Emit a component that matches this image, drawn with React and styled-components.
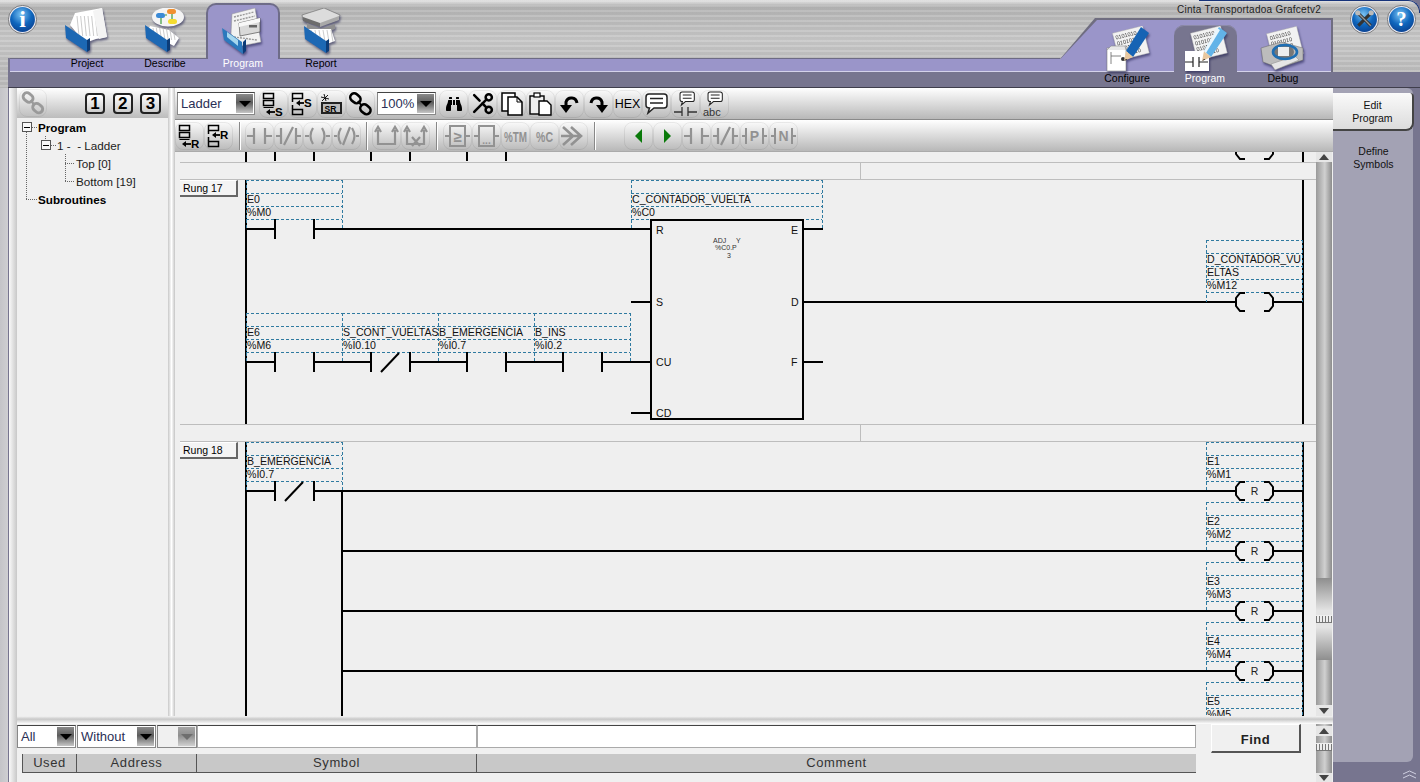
import * as React from "react";
import styled, { createGlobalStyle } from "styled-components";
import { FaBinoculars } from "react-icons/fa";
import { Scissors } from "lucide-react";

const LAV = "#9a95c9";
const DARK = "#77758f";
const UI = '"Liberation Sans", Arial, sans-serif';

const GlobalStyle = createGlobalStyle`
  html, body { margin: 0; padding: 0; background: ${DARK}; }
  body { font-family: ${UI}; color: #000; }
`;

const Frame = styled.div`
  width: 1420px;
  height: 782px;
  overflow: hidden;
  display: flex;
  flex-direction: column;
  background: ${DARK};
`;

/* ---------- header ---------- */
const Header = styled.header`
  position: relative;
  height: 88px;
  flex: none;
  display: grid;
  grid-template-columns: 1060px 273px 87px;
  grid-template-rows: 72px 16px;
  background: repeating-linear-gradient(180deg, rgba(255, 255, 255, 0.1) 0 2px, rgba(0, 0, 0, 0.03) 2px 5px),
    linear-gradient(180deg, #dcdcdc 0, #d8d8d8 3px, #b4b4b4 6px, #c8c8c8 40px, #bcbcbc 72px);
  border-top-right-radius: 12px;
  &::after {
    content: "";
    position: absolute;
    top: 0;
    right: 0;
    width: 220px;
    height: 12px;
    border-top: 1px solid #16337a;
    border-right: 1px solid #16337a;
    border-top-right-radius: 12px;
  }
`;

const LeftArea = styled.div`
  grid-row: 1;
  grid-column: 1;
  margin-left: 8px;
  display: flex;
  align-items: flex-start;
  background: linear-gradient(${DARK}, ${DARK}) 0 58px / 2px 14px no-repeat,
    linear-gradient(180deg, transparent 58px, #6d6b85 58px, #6d6b85 59px, ${LAV} 59px, ${LAV} 71px, #d4d2ea 71px);
`;

const RoundBtn = styled.div`
  width: 28px;
  height: 28px;
  flex: none;
  margin-top: 5px;
`;

const TabRow = styled.nav`
  display: flex;
  margin-left: 12px;
`;

const Tab = styled.div`
  width: 74px;
  margin: 3px 2px 0;
  display: flex;
  flex-direction: column;
  align-items: center;
`;

const TabTop = styled.div`
  width: 74px;
  height: 56px;
  box-sizing: border-box;
  display: flex;
  justify-content: center;
  padding-top: ${(p) => (p.$active ? 3 : 5)}px;
  ${(p) =>
    p.$active &&
    `background: ${LAV};
     border: 2px solid #6e6c88;
     border-bottom: none;
     border-radius: 10px 10px 0 0;`}
`;

const TabLabel = styled.span`
  font-size: 10.5px;
  line-height: 12px;
  margin-top: -2px;
  color: ${(p) => (p.$active ? "#fff" : "#000")};
  white-space: nowrap;
`;

const RightArea = styled.div`
  grid-row: 1 / 3;
  grid-column: 2;
  position: relative;
  z-index: 1;
  &::before,
  &::after {
    content: "";
    position: absolute;
    left: 0;
    right: 0;
    top: 18px;
    height: 41px;
    clip-path: polygon(35px 0, 100% 0, 100% 100%, 0 100%);
    z-index: -1;
  }
  &::before {
    height: 54px;
    clip-path: polygon(35px 0, 100% 0, 100% 100%, 35px 100%, 0 41px);
    background: #6f6d80;
  }
  &::after {
    top: 20px;
    right: 2px;
    height: 52px;
    clip-path: polygon(37px 0, 100% 0, 100% 100%, 0 100%, 0 39.5px);
    background: linear-gradient(180deg, ${LAV} 51px, #d4d2ea 51px);
  }
`;

const TitleText = styled.div`
  height: 15px;
  padding-top: 4px;
  text-align: right;
  padding-right: 12px;
  font-size: 10px;
  line-height: 12px;
  letter-spacing: 0.25px;
  color: #222;
  white-space: nowrap;
`;

const RightTabs = styled.nav`
  display: flex;
  padding-left: 28px;
  margin-top: -19px;
`;

const RightTab = styled.div`
  width: 78px;
  display: flex;
  flex-direction: column;
  align-items: center;
`;

const RightTabTop = styled.div`
  width: 63px;
  height: 47px;
  margin-top: 25px;
  display: flex;
  justify-content: center;
  align-items: flex-end;
  border-radius: 10px 10px 0 0;
  ${(p) => p.$active && `background: ${DARK}; box-shadow: inset 0 1px 0 #8d8ba8;`}
`;

const RightTabLabel = styled(TabLabel)`
  margin-top: 0;
`;

const HelpArea = styled.div`
  grid-row: 1;
  grid-column: 3;
  display: flex;
  gap: 9px;
  padding-left: 17px;
`;

const Strip = styled.div`
  grid-row: 2;
  grid-column: 1 / 4;
  margin-left: 8px;
  background: ${DARK};
  border-bottom: 1px solid #3f3e4c;
`;

/* ---------- body ---------- */
const Body = styled.div`
  flex: 1;
  min-height: 0;
  display: flex;
`;

const OuterGutter = styled.div`
  width: 8px;
  flex: none;
  background: linear-gradient(90deg, #c4c4c8, #cfcfd2);
  border-right: 1px solid ${DARK};
`;

const InnerGutter = styled.div`
  width: 8px;
  flex: none;
  background: linear-gradient(90deg, #fafafa, #c8c8c8);
`;

const Main = styled.main`
  width: 1316px;
  flex: none;
  display: flex;
  flex-direction: column;
  background: #f0f0f0;
`;

const Upper = styled.div`
  height: 628px;
  flex: none;
  display: flex;
`;

const TreePanel = styled.aside`
  width: 151px;
  flex: none;
  display: flex;
  flex-direction: column;
  background: #f0f0f0;
`;

const TreeTools = styled.div`
  height: 30px;
  flex: none;
  display: flex;
  align-items: center;
  padding-left: 2px;
  background: linear-gradient(180deg, #fff, #bcbcbc);
`;

const LinkBtn = styled.div`
  width: 28px;
  height: 28px;
  display: flex;
  align-items: center;
  justify-content: center;
  margin-right: 38px;
  border: 1px solid rgba(0, 0, 0, 0.06);
  border-radius: 8px;
  box-sizing: border-box;
`;

const NumBtn = styled.div`
  width: 21px;
  height: 21px;
  margin-right: 7.5px;
  box-sizing: border-box;
  border: 2px solid #222;
  border-radius: 4px;
  background: linear-gradient(180deg, #fff, #ccc);
  font-size: 17px;
  font-weight: 700;
  line-height: 17px;
  text-align: center;
`;

const Tree = styled.ul`
  list-style: none;
  margin: 0;
  padding: 0;
`;

const TreeRow = styled.li`
  height: 18px;
  display: flex;
  align-items: center;
  font-size: 11.7px;
  font-weight: ${(p) => (p.$bold ? 700 : 400)};
  color: ${(p) => (p.$bold ? "#000" : "#1c1c1c")};
  white-space: pre;
`;

const GutterSvg = styled.svg`
  flex: none;
`;

const Splitter = styled.div`
  width: 7px;
  flex: none;
  background: linear-gradient(90deg, #c8c8c8, #fff 50%, #c4c4c4);
`;

const Editor = styled.section`
  width: 1158px;
  flex: none;
  display: flex;
  flex-direction: column;
`;

const ToolRow = styled.div`
  height: ${(p) => p.$h}px;
  flex: none;
  box-sizing: border-box;
  display: flex;
  align-items: center;
  padding-left: ${(p) => p.$pad}px;
  background: linear-gradient(180deg, #fff, #b8b8b8);
  border-bottom: 1px solid ${(p) => p.$line};
`;

const ToolBtn = styled.div`
  width: 29px;
  height: 28px;
  flex: none;
  box-sizing: border-box;
  display: flex;
  align-items: center;
  justify-content: center;
  border: 1px solid rgba(0, 0, 0, 0.07);
  border-radius: 8px;
  color: #000;
  font-size: 12.5px;
`;

const CutIcon = styled(Scissors)`
  transform: rotate(180deg);
`;

const ToolSep = styled.div`
  width: 1px;
  height: 28px;
  flex: none;
  margin: ${(p) => p.$margin};
  background: #888;
  box-shadow: 1px 0 0 #fff;
`;

const Combo = styled.div`
  width: ${(p) => p.$w}px;
  height: ${(p) => p.$h}px;
  flex: none;
  margin: ${(p) => p.$margin || 0};
  box-sizing: border-box;
  display: flex;
  align-items: center;
  justify-content: space-between;
  padding: 1px 1px 1px 3px;
  background: ${(p) => (p.$blank ? "#f0f0f0" : "#fff")};
  border: 1px solid #888;
  border-top-color: #444;
  font-size: 13px;
  color: #2a2f55;
`;

const ComboArrow = styled.span`
  width: 17px;
  align-self: stretch;
  flex: none;
  display: flex;
  align-items: center;
  justify-content: center;
  background: ${(p) =>
    p.$off
      ? "linear-gradient(180deg, #a6a6a6, #8e8e8e 45%, #d0d0d0)"
      : "linear-gradient(180deg, #8a8a8a, #5c5c5c 45%, #c6c6c6)"};
  &::after {
    content: "";
    border-left: 6px solid transparent;
    border-right: 6px solid transparent;
    border-top: 6px solid ${(p) => (p.$off ? "#6e6e6e" : "#000")};
  }
`;

const LadderRow = styled.div`
  flex: 1;
  min-height: 0;
  display: flex;
`;

const Ladder = styled.div`
  width: 1141px;
  flex: none;
  position: relative;
  overflow: hidden;
  background: #efefef;
  svg {
    display: block;
  }
`;

const RungButton = styled.div`
  position: absolute;
  left: 5px;
  top: ${(p) => p.$top}px;
  width: 58px;
  height: 17px;
  box-sizing: border-box;
  padding-left: 3px;
  background: #f4f4f4;
  border-top: 1px solid #fff;
  border-right: 2px solid #666;
  border-bottom: 2px solid #666;
  font-size: 10.5px;
  line-height: 14px;
`;

const VScroll = styled.div`
  width: 16px;
  flex: none;
  margin-right: 1px;
  display: flex;
  flex-direction: column;
  background: linear-gradient(90deg, #999, #d0d0d0 55%, #8c8c8c);
`;

const ScrollArrow = styled.div`
  height: ${(p) => p.$h}px;
  flex: none;
  display: flex;
  align-items: center;
  justify-content: center;
  background: #e6e6e6;
  &::after {
    content: "";
    border-left: 5px solid transparent;
    border-right: 5px solid transparent;
    ${(p) => (p.$up ? "border-bottom: 6px solid #444;" : "border-top: 6px solid #444;")}
  }
`;

const ScrollGap = styled.div`
  height: ${(p) => p.$h}px;
  flex: none;
`;

const ScrollThumb = styled.div`
  height: ${(p) => p.$h}px;
  flex: none;
  display: flex;
  align-items: center;
  background: linear-gradient(180deg, #8e8e8e, #e4e4e4 40%, #e4e4e4 60%, #8e8e8e);
`;

const ScrollGrip = styled.div`
  width: 100%;
  height: 8px;
  background: repeating-linear-gradient(90deg, #777 0 1px, #eee 1px 3px);
  border-top: 1px solid #eee;
  border-bottom: 1px solid #777;
  box-sizing: border-box;
`;

const HDivider = styled.div`
  height: 8px;
  flex: none;
  background: linear-gradient(180deg, #f4f4f4, #c8c8c8 40%, #fff);
`;

const Lower = styled.div`
  flex: 1;
  min-height: 0;
  display: flex;
`;

const Filters = styled.div`
  width: 1179px;
  flex: none;
  display: flex;
  flex-direction: column;
`;

const FilterRow = styled.div`
  height: 23px;
  display: flex;
  margin-top: 1px;
`;

const SearchBox = styled.div`
  width: ${(p) => p.$w}px;
  flex: none;
  box-sizing: border-box;
  background: #fff;
  border: 1px solid #aaa;
  border-top-color: #444;
`;

const Columns = styled.div`
  margin: 6px 0 0 5px;
  height: 18px;
  display: grid;
  grid-template-columns: 53px 120px 280px 720px;
  background: #c8c8c8;
  border-left: 1px solid #555;
  border-bottom: 1px solid #555;
`;

const ColumnHead = styled.div`
  text-align: center;
  font-size: 13px;
  line-height: 17px;
  letter-spacing: 0.6px;
  color: #333;
  & + & {
    border-left: 1px solid #555;
  }
`;

const FindSlot = styled.div`
  width: 120px;
  flex: none;
  padding-left: 15px;
  box-sizing: border-box;
`;

const FindButton = styled.div`
  width: 90px;
  height: 29px;
  box-sizing: border-box;
  background: #f0f0f0;
  border-top: 1px solid #fff;
  border-left: 1px solid #fff;
  border-right: 2px solid #555;
  border-bottom: 2px solid #555;
  text-align: center;
  font-size: 13px;
  font-weight: 700;
  line-height: 29px;
  letter-spacing: 0.5px;
  color: #222;
`;

const Rail = styled.aside`
  width: 87px;
  flex: none;
  display: flex;
  flex-direction: column;
`;

const SidePanel = styled.div`
  width: 80px;
  height: 674px;
  flex: none;
  box-sizing: border-box;
  padding-top: 5px;
  background: #a3a2b4;
  border-radius: 0 6px 6px 0;
`;

const SideButton = styled.div`
  width: 81px;
  height: 38px;
  box-sizing: border-box;
  padding-top: 6px;
  margin-bottom: 8px;
  text-align: center;
  font-size: 10.5px;
  line-height: 13px;
  color: #111;
  ${(p) =>
    p.$active &&
    `background: linear-gradient(180deg, #fafafa, #dcdcdc);
     border-right: 2px solid #444;
     border-bottom: 2px solid #444;
     border-radius: 0 4px 8px 0;`}
`;

const Chevrons = styled.div`
  display: flex;
  justify-content: flex-end;
  padding: 8px 3px 0 0;
`;

/* ---------- round header buttons ---------- */
const RoundIcon = ({ id, children }) => (
  <svg width="29" height="29" viewBox="0 0 28 28">
    <defs>
      <radialGradient id={id} cx="45%" cy="30%" r="75%">
        <stop offset="0" stopColor="#7cc4f4" />
        <stop offset="0.55" stopColor="#0f66bd" />
        <stop offset="1" stopColor="#0a3f8e" />
      </radialGradient>
    </defs>
    <circle cx="14" cy="14" r="13.6" fill="#e8e8f0" stroke="#444" strokeWidth="0.6" />
    <circle cx="14" cy="14" r="12" fill={`url(#${id})`} />
    {children}
  </svg>
);

const HeadGlyph = styled.text`
  font-family: "Liberation Serif", serif;
  font-weight: 700;
  fill: #fff;
  text-anchor: middle;
`;

/* ---------- header pictures ---------- */
const Pic = styled.svg`
  display: block;
  filter: drop-shadow(1px 2px 1px rgba(20, 20, 70, 0.55));
`;

const Folder = ({ dx = 0, dy = 0 }) => (
  <g transform={`translate(${dx} ${dy})`}>
    <polygon points="24,32 27,30 27,42 24,44" fill="#0c3c78" />
    <polygon points="2,17 24,32 24,44 3,30" fill="#1c68b4" />
  </g>
);

const PaperLines = ({ x1, x2, y1, y2, n }) =>
  Array.from({ length: n }, (_, i) => {
    const t = i / (n - 1);
    const x = x1 + (x2 - x1) * t;
    return <line key={i} x1={x} y1={y1} x2={x + 2} y2={y2} stroke="#b5b5b5" strokeWidth="0.7" />;
  });

const ProjectPic = () => (
  <Pic width="48" height="46" viewBox="0 0 48 46">
    <polygon points="12,5 39,0 44,29 33,31 22,35 7,17" fill="#fff" />
    <PaperLines x1={14} x2={36} y1={8} y2={28} n={7} />
    <polygon points="30,3 39,0 44,29 36,31" fill="#f4f4f4" />
    <Folder />
  </Pic>
);

const DescribePic = () => (
  <Pic width="48" height="46" viewBox="0 0 48 46">
    <polygon points="9,18 28,22 38,30 33,38 25,34 7,22" fill="#fff" />
    <PaperLines x1={12} x2={32} y1={20} y2={32} n={7} />
    <ellipse cx="27" cy="9" rx="16" ry="9.5" fill="#f4f4f4" />
    <rect x="15" y="5" width="9" height="5" rx="2.5" fill="#3a8ad6" />
    <rect x="26" y="1" width="9" height="5" rx="2.5" fill="#f09030" />
    <rect x="27" y="11" width="9" height="5" rx="2.5" fill="#f4dc30" />
    <path d="M20 10 V16 M24 7 H26 M31 6 V11" stroke="#3c9a3c" strokeWidth="1.2" fill="none" />
    <Folder dx={2} />
  </Pic>
);

const ProgramPic = () => (
  <Pic width="48" height="46" viewBox="0 0 48 46">
    <polygon points="13,6 36,0 42,34 22,38 12,26" fill="#f2f2f2" stroke="#999" strokeWidth="0.5" />
    <path d="M15 9 L35 4 M15 13 L36 8 M15 29 L38 32" stroke="#999" strokeWidth="1.4" strokeDasharray="2 1" />
    <polygon points="20,15 41,10 41,24 21,28" fill="#d9d9d9" stroke="#555" strokeWidth="0.7" />
    <polygon points="20,15 41,10 41,14 20,19" fill="#f8f8f8" />
    <rect x="30" y="17" width="8" height="2.5" fill="#666" />
    <polygon points="3,20 23,34 24,46 5,32" fill="#2b79bd" />
    <polygon points="8,24 19,32 19,38 8,29" fill="#a5d6ee" />
    <polygon points="24,34 27,31 27,43 24,46" fill="#0c3c78" />
  </Pic>
);

const ReportPic = () => (
  <Pic width="48" height="46" viewBox="0 0 48 46">
    <polygon points="5,7 27,0 43,7 41,12 23,18 6,12" fill="#dcdcdc" stroke="#666" strokeWidth="0.6" />
    <polygon points="6,9 23,15 23,19 6,13" fill="#6c6c6c" />
    <polygon points="23,15 42,8 42,12 23,19" fill="#a9a9a9" />
    <polygon points="10,15 24,21 38,16 38,21 24,27 10,21" fill="#8f8f8f" />
    <polygon points="11,21 34,21 38,33 30,36 10,28" fill="#fff" />
    <PaperLines x1={14} x2={34} y1={22} y2={34} n={6} />
    <Folder dx={5} dy={1} />
  </Pic>
);

const BitsPaper = ({ rows = 4, x = 12, y = 4 }) => (
  <g transform="rotate(-14 24 16)">
    <rect x={x} y={y} width="31" height="28" fill="#f2f2f2" stroke="#aaa" strokeWidth="0.4" />
    {Array.from({ length: rows }, (_, i) => (
      <text key={i} x={x + 2} y={y + 7 + i * 6} fontSize="5.5" fontFamily={UI} fill="#333">
        0101010
      </text>
    ))}
  </g>
);

const Pencil = ({ body, tip = "#e8c8a0" }) => (
  <g>
    <polygon points="38,1 46,7 30,31 23,25" fill={body} />
    <polygon points="23,25 30,31 21,35" fill={tip} />
    <polygon points="23,33 21,35 24.5,33.6" fill="#222" />
  </g>
);

const ConfigurePic = () => (
  <Pic width="48" height="46" viewBox="0 0 48 46">
    <BitsPaper />
    <rect x="4" y="22" width="19" height="23" fill="#fff" stroke="#888" strokeWidth="0.6" />
    <path d="M4 24 L8 20 H22 L23 24" fill="#e8e8e8" stroke="#888" strokeWidth="0.6" />
    <path d="M8 26 V38 M8 30 H18" stroke="#666" strokeWidth="0.8" fill="none" />
    <circle cx="20" cy="33" r="2" fill="#333" />
    <Pencil body="#1663b4" />
  </Pic>
);

const EditPic = () => (
  <Pic width="48" height="46" viewBox="0 0 48 46">
    <BitsPaper />
    <rect x="4" y="25" width="24" height="20" fill="#fff" />
    <path d="M4 36 H12 M12 31 V41 M18 31 V41 M18 36 H27" stroke="#222" strokeWidth="1.2" fill="none" />
    <Pencil body="#62b3e8" />
    <polygon points="36,2 39,4 25,27 23,25" fill="#e9f6fd" />
  </Pic>
);

const DebugPic = () => (
  <Pic width="48" height="46" viewBox="0 0 48 46">
    <BitsPaper x={10} />
    <polygon points="2,22 22,16 44,22 44,34 20,42 4,36" fill="#bcbcbc" stroke="#666" strokeWidth="0.5" />
    <polygon points="12,38 36,30 40,34 16,44" fill="#e6e6e6" stroke="#888" strokeWidth="0.5" />
    <ellipse cx="24" cy="26" rx="11" ry="8" fill="#777" />
    <ellipse cx="26" cy="26" rx="12" ry="7" fill="none" stroke="#1f6fb4" strokeWidth="2.6" />
    <rect x="19" y="21" width="11" height="9" fill="#eee" />
  </Pic>
);

/* ---------- toolbar icons ---------- */
const IconLabel = styled.text`
  font-family: ${UI};
  font-weight: ${(p) => p.$w || 700};
  font-size: ${(p) => p.$s}px;
  fill: ${(p) => p.$c || "#000"};
`;

const Ico = ({ children }) => (
  <svg width="27" height="26" viewBox="0 0 27 26">
    {children}
  </svg>
);

const stackRect = { fill: "none", stroke: "#000", strokeWidth: 1.5 };

const InsertBelow = ({ letter }) => (
  <Ico>
    <rect x="3.5" y="2.5" width="10" height="5" {...stackRect} />
    <rect x="3.5" y="9.5" width="10" height="5" {...stackRect} />
    <rect x="3.5" y="16" width="10" height="1" fill="#000" />
    <path d="M8 21 H15" stroke="#000" strokeWidth="1.8" />
    <polygon points="6,21 10,18 10,24" />
    <IconLabel x="15" y="25" $s={11.5}>
      {letter}
    </IconLabel>
  </Ico>
);

const InsertAbove = ({ letter }) => (
  <Ico>
    <rect x="3.5" y="2.5" width="10" height="5" {...stackRect} />
    <path d="M3.5 8 V11 M3.5 14 V18" stroke="#000" strokeWidth="1.5" />
    <rect x="3.5" y="18.5" width="10" height="5" {...stackRect} />
    <path d="M9 12 H15" stroke="#000" strokeWidth="1.8" />
    <polygon points="7,12 11,9 11,15" />
    <IconLabel x="15" y="16" $s={11.5}>
      {letter}
    </IconLabel>
  </Ico>
);

const SrIcon = () => (
  <Ico>
    <rect x="3" y="11" width="21" height="12" fill="#222" />
    <rect x="5" y="13" width="17" height="8" fill="#bbb" />
    <IconLabel x="6.5" y="20.5" $s={8.5}>
      SR
    </IconLabel>
    <path d="M6 3 L8 10 M3 6 L11 8 M10 4 L4 10" stroke="#000" strokeWidth="0.9" />
  </Ico>
);

const LinkIcon = ({ color = "#000", width = 2.6 }) => (
  <Ico>
    <rect x="3" y="3" width="11" height="8" rx="4" transform="rotate(40 8 7)" fill="none" stroke={color} strokeWidth={width} />
    <rect x="13" y="14" width="11" height="8" rx="4" transform="rotate(40 18 18)" fill="none" stroke={color} strokeWidth={width} />
    <path d="M11 10 L15 15" stroke={color} strokeWidth={width - 0.6} />
  </Ico>
);

const DocsIcon = () => (
  <Ico>
    <rect x="4" y="2" width="13" height="18" fill="#fff" stroke="#000" strokeWidth="1.5" />
    <path d="M10 6 H19 L24 11 V24 H10 Z" fill="#fff" stroke="#000" strokeWidth="1.5" />
    <path d="M19 6 V11 H24" fill="none" stroke="#000" strokeWidth="1" />
  </Ico>
);

const PasteIcon = () => (
  <Ico>
    <rect x="3" y="5" width="14" height="18" fill="#eee" stroke="#000" strokeWidth="1.4" />
    <rect x="7" y="2" width="6" height="4" fill="#fff" stroke="#000" strokeWidth="1.2" />
    <path d="M12 10 H20 L24 14 V24 H12 Z" fill="#fff" stroke="#000" strokeWidth="1.4" />
  </Ico>
);

const TurnIcon = ({ flip }) => (
  <Ico>
    <g transform={flip ? "translate(27 0) scale(-1 1)" : undefined}>
      <path d="M21 12 C20 6 12 5 10 11 L10 15" fill="none" stroke="#000" strokeWidth="3" />
      <polygon points="4,14 16,14 10,22" />
    </g>
  </Ico>
);

const Bubble = ({ x = 0, y = 0, s = 1 }) => (
  <g transform={`translate(${x} ${y}) scale(${s})`}>
    <path
      d="M6 3 H21 Q24 3 24 6 V14 Q24 17 21 17 H11 L5 22 L6.5 17 Q3 17 3 14 V6 Q3 3 6 3 Z"
      fill="#fff"
      stroke="#222"
      strokeWidth="1.5"
    />
    <path d="M7 7.5 H20 M7 12 H20" stroke="#222" strokeWidth="1.5" />
  </g>
);

const BubbleContact = () => (
  <Ico>
    <Bubble x={6} y={-1} s={0.68} />
    <path d="M2 21 H10 M10 16 V25 M16 16 V25 M16 21 H25" stroke="#333" strokeWidth="1.3" fill="none" />
  </Ico>
);

const BubbleText = () => (
  <Ico>
    <Bubble x={5} y={-1} s={0.68} />
    <IconLabel x="2" y="25" $s={11} $w={400} $c="#333">
      abc
    </IconLabel>
  </Ico>
);

const OFF = "#929292";
const Gray = ({ d, w = 2.2 }) => (
  <Ico>
    <path d={d} fill="none" stroke={OFF} strokeWidth={w} />
  </Ico>
);

// condensed tall lettering of the %TM and %C buttons
const GrayText = ({ children, sx }) => (
  <Ico>
    <g transform={`translate(13.5 19) scale(${sx} 1)`}>
      <IconLabel x="0" y="0" textAnchor="middle" $s={15} $c={OFF}>
        {children}
      </IconLabel>
    </g>
  </Ico>
);

const BoxFunc = ({ label, dash }) => (
  <Ico>
    <path d="M1 13 H6 M21 13 H26" stroke={OFF} strokeWidth="2" />
    <rect x="6" y="3" width="15" height="20" fill="none" stroke={OFF} strokeWidth="2" />
    <IconLabel x="13.5" y={dash ? 21 : 19} textAnchor="middle" $s={dash ? 10 : 15} $c={OFF}>
      {label}
    </IconLabel>
  </Ico>
);

const PnIcon = ({ letter }) => (
  <Ico>
    <path d="M1 13 H5 M5 5 V21 M22 5 V21 M22 13 H26" stroke={OFF} strokeWidth="2" fill="none" />
    <IconLabel x="13.5" y="18" textAnchor="middle" $s={14} $c={OFF}>
      {letter}
    </IconLabel>
  </Ico>
);

const Tri = ({ dir }) => (
  <Ico>
    <polygon points={dir === "left" ? "17,6 10,13 17,20" : "10,6 17,13 10,20"} fill="#0a7a0a" />
  </Ico>
);

const CONTACT = "M1 13 H8 M8 5 V21 M19 5 V21 M19 13 H26";
const NC_CONTACT = "M1 13 H6 M6 5 V21 M21 5 V21 M21 13 H26 M9 22 L18 4";
const COIL = "M1 13 H5 M9 5 Q4 13 9 21 M18 5 Q23 13 18 21 M22 13 H26";
const NC_COIL = "M1 13 H4 M8 5 Q3 13 8 21 M19 5 Q24 13 19 21 M23 13 H26 M10 22 L17 4";
const BRANCH = "M5 7 V21 H22 V7 M2 9 L5 4 L8 9 M19 9 L22 4 L25 9";
const BRANCH_X = "M5 7 V21 H22 V7 M2 9 L5 4 L8 9 M19 9 L22 4 L25 9 M10 14 L18 23 M18 14 L10 23";
const DOUBLE_ARROW = "M3 4 L13 13 L3 22 M11 4 L21 13 L11 22 M1 13 H19";

/* ---------- ladder drawing: page coordinates, so it reads like the picture ---------- */
const DASH = "#2f7aa0";

const Wire = ({ d }) => <path d={d} fill="none" stroke="#000" strokeWidth="2" />;

const LabelText = styled.text`
  font-family: ${UI};
  font-size: 10.6px;
  fill: #111;
`;

const TagBox = ({ x, y, wireY, w = 96, lines }) => {
  const rows = Array.from({ length: lines.length + 1 }, (_, i) => y + i * 13);
  return (
    <g>
      <path
        d={
          rows.map((r) => `M${x} ${r + 0.5} H${x + w}`).join(" ") +
          ` M${x + 0.5} ${y} V${wireY} M${x + w + 0.5} ${y} V${wireY}`
        }
        fill="none"
        stroke={DASH}
        strokeDasharray="3 2"
        shapeRendering="crispEdges"
      />
      {lines.map((t, i) => (
        <LabelText key={i} x={x + 1} y={y + i * 13 + 9.7}>
          {t}
        </LabelText>
      ))}
    </g>
  );
};

const Contact = ({ x, y, closed }) => (
  <g>
    <Wire d={`M${x - 29} ${y} H${x} M${x} ${y - 10} V${y + 10} M${x + 39} ${y - 10} V${y + 10}`} />
    {closed && <Wire d={`M${x + 10} ${y + 10} L${x + 28} ${y - 9}`} />}
  </g>
);

const CoilLetter = styled.text`
  font-family: ${UI};
  font-size: 10.5px;
  fill: #222;
`;

const CoilMark = ({ y, letter }) => (
  <g>
    <path
      d={`M1245 ${y - 9} H1240 L1236 ${y - 4} V${y + 4} L1240 ${y + 9} H1245 M1264 ${y - 9} H1269 L1273 ${y - 4} V${y + 4} L1269 ${y + 9} H1264`}
      fill="none"
      stroke="#000"
      strokeWidth="2"
    />
    {letter && (
      <CoilLetter x="1254.5" y={y + 4} textAnchor="middle">
        {letter}
      </CoilLetter>
    )}
  </g>
);

const BlockPin = styled.text`
  font-family: ${UI};
  font-size: 10.6px;
  fill: #111;
`;

const BlockNote = styled.text`
  font-family: ${UI};
  font-size: 7px;
  fill: #333;
`;

const RESET_COILS = [
  { y: 442, wire: 491 },
  { y: 502, wire: 551 },
  { y: 562, wire: 611 },
  { y: 622, wire: 671 },
];

const LadderDrawing = () => (
  <svg width="1141" height="564" viewBox="175 152 1141 564">
    {/* rung separators */}
    <path
      d="M180 162.5 H1316 M180 179.5 H1316 M180 424.5 H1316 M180 441.5 H1316 M860.5 162 V180 M860.5 424 V442"
      stroke="#bdbdbd"
      fill="none"
      shapeRendering="crispEdges"
    />

    {/* tail of rung 16 */}
    <Wire d="M246 152 V162 M275 152 V161 M314 152 V161 M371 152 V161 M410 152 V161 M467 152 V161 M506 152 V161 M1303 152 V162" />
    <path d="M1245 159 H1240 L1236 154 V152 M1264 159 H1269 L1273 154 V152" fill="none" stroke="#000" strokeWidth="2" />

    {/* power rails */}
    <Wire d="M246 180 V424 M1303 180 V424 M246 442 V716 M1303 442 V716" />

    {/* rung 17 */}
    <TagBox x={246} y={180} wireY={229} lines={["", "E0", "%M0"]} />
    <Contact x={275} y={229} />
    <Wire d="M314 229 H651" />
    <TagBox x={631} y={180} w={191} wireY={229} lines={["", "C_CONTADOR_VUELTA", "%C0"]} />

    <TagBox x={246} y={313} wireY={362} lines={["", "E6", "%M6"]} />
    <TagBox x={342} y={313} wireY={362} lines={["", "S_CONT_VUELTAS", "%I0.10"]} />
    <TagBox x={438} y={313} wireY={362} lines={["", "B_EMERGENCIA", "%I0.7"]} />
    <TagBox x={534} y={313} wireY={362} lines={["", "B_INS", "%I0.2"]} />
    <Contact x={275} y={362} />
    <Wire d="M314 362 H342" />
    <Contact x={371} y={362} closed />
    <Wire d="M410 362 H438" />
    <Contact x={467} y={362} />
    <Wire d="M506 362 H534" />
    <Contact x={563} y={362} />
    <Wire d="M602 362 H651" />

    {/* counter block */}
    <rect x="651" y="220" width="152" height="199" fill="none" stroke="#000" strokeWidth="2" />
    <Wire d="M631 302 H651 M631 413 H651 M803 229 H823 M803 362 H823 M803 302 H1236 M1274 302 H1303" />
    <BlockPin x="656" y="234">R</BlockPin>
    <BlockPin x="656" y="306">S</BlockPin>
    <BlockPin x="656" y="366">CU</BlockPin>
    <BlockPin x="656" y="417">CD</BlockPin>
    <BlockPin x="791" y="234">E</BlockPin>
    <BlockPin x="791" y="306">D</BlockPin>
    <BlockPin x="791" y="366">F</BlockPin>
    <BlockNote x="713" y="243">ADJ</BlockNote>
    <BlockNote x="736" y="243">Y</BlockNote>
    <BlockNote x="715" y="250">%C0.P</BlockNote>
    <BlockNote x="727" y="257.5">3</BlockNote>

    <TagBox x={1206} y={240} wireY={302} lines={["", "D_CONTADOR_VU", "ELTAS", "%M12"]} />
    <CoilMark y={302} />

    {/* rung 18 */}
    <TagBox x={246} y={442} wireY={491} lines={["", "B_EMERGENCIA", "%I0.7"]} />
    <Contact x={275} y={491} closed />
    <Wire d="M314 491 H1236 M342 491 V716 M342 551 H1236 M342 611 H1236 M342 671 H1236" />
    {RESET_COILS.map((c, i) => (
      <g key={c.y}>
        <TagBox x={1206} y={c.y} wireY={c.wire} lines={["", `E${i + 1}`, `%M${i + 1}`]} />
        <CoilMark y={c.wire} letter="R" />
        <Wire d={`M1274 ${c.wire} H1303`} />
      </g>
    ))}
    <TagBox x={1206} y={682} wireY={731} lines={["", "E5", "%M5"]} />
  </svg>
);

const TreeGutter = ({ width, children }) => (
  <GutterSvg width={width} height="18" viewBox={`0 0 ${width} 18`}>
    <g stroke="#666" strokeDasharray="1 1" fill="none" shapeRendering="crispEdges">
      {children}
    </g>
  </GutterSvg>
);

const PlusBox = ({ x }) => (
  <g strokeDasharray="none">
    <rect x={x + 0.5} y="4.5" width="9" height="9" fill="#f8f8f8" stroke="#555" />
    <path d={`M${x + 2} 9.5 H${x + 8}`} stroke="#000" />
  </g>
);

export default function App() {
  return (
    <Frame>
      <GlobalStyle />
      <Header>
        <LeftArea>
          <RoundBtn>
            <RoundIcon id="infoDisc">
              <HeadGlyph x="14" y="21.5" fontSize="23">
                i
              </HeadGlyph>
            </RoundIcon>
          </RoundBtn>
          <TabRow>
            <Tab>
              <TabTop>
                <ProjectPic />
              </TabTop>
              <TabLabel>Project</TabLabel>
            </Tab>
            <Tab>
              <TabTop>
                <DescribePic />
              </TabTop>
              <TabLabel>Describe</TabLabel>
            </Tab>
            <Tab>
              <TabTop $active>
                <ProgramPic />
              </TabTop>
              <TabLabel $active>Program</TabLabel>
            </Tab>
            <Tab>
              <TabTop>
                <ReportPic />
              </TabTop>
              <TabLabel>Report</TabLabel>
            </Tab>
          </TabRow>
        </LeftArea>

        <RightArea>
          <TitleText>Cinta Transportadoa Grafcetv2</TitleText>
          <RightTabs>
            <RightTab>
              <RightTabTop>
                <ConfigurePic />
              </RightTabTop>
              <RightTabLabel>Configure</RightTabLabel>
            </RightTab>
            <RightTab>
              <RightTabTop $active>
                <EditPic />
              </RightTabTop>
              <RightTabLabel $active>Program</RightTabLabel>
            </RightTab>
            <RightTab>
              <RightTabTop>
                <DebugPic />
              </RightTabTop>
              <RightTabLabel>Debug</RightTabLabel>
            </RightTab>
          </RightTabs>
        </RightArea>

        <HelpArea>
          <RoundBtn>
            <RoundIcon id="toolDisc">
              <path d="M8 8 L20 20 M20 8 L8 20" stroke="#333" strokeWidth="3" />
              <path d="M8 8 L20 20" stroke="#999" strokeWidth="1.2" />
              <circle cx="7.5" cy="7.5" r="2.5" fill="#bbb" />
              <circle cx="20.5" cy="7.5" r="2.5" fill="#bbb" />
            </RoundIcon>
          </RoundBtn>
          <RoundBtn>
            <RoundIcon id="helpDisc">
              <HeadGlyph x="14" y="20.5" fontSize="20" fontFamily={UI}>
                ?
              </HeadGlyph>
            </RoundIcon>
          </RoundBtn>
        </HelpArea>
        <Strip />
      </Header>

      <Body>
        <OuterGutter />
        <InnerGutter />
        <Main>
          <Upper>
            <TreePanel>
              <TreeTools>
                <LinkBtn>
                  <LinkIcon color="#9a9a9a" width={3} />
                </LinkBtn>
                <NumBtn>1</NumBtn>
                <NumBtn>2</NumBtn>
                <NumBtn>3</NumBtn>
              </TreeTools>
              <Tree>
                <TreeRow $bold>
                  <TreeGutter width={21}>
                    <path d="M9.5 14 V18 M15 9.5 H20" />
                    <PlusBox x={5} />
                  </TreeGutter>
                  Program
                </TreeRow>
                <TreeRow>
                  <TreeGutter width={40}>
                    <path d="M9.5 0 V18 M28.5 0 V4 M34 9.5 H39" />
                    <PlusBox x={24} />
                  </TreeGutter>
                  1 -  - Ladder
                </TreeRow>
                <TreeRow>
                  <TreeGutter width={59}>
                    <path d="M9.5 0 V18 M48.5 0 V18 M48 9.5 H58" />
                  </TreeGutter>
                  Top [0]
                </TreeRow>
                <TreeRow>
                  <TreeGutter width={59}>
                    <path d="M9.5 0 V18 M48.5 0 V9 M48 9.5 H58" />
                  </TreeGutter>
                  Bottom [19]
                </TreeRow>
                <TreeRow $bold>
                  <TreeGutter width={21}>
                    <path d="M9.5 0 V9 M9 9.5 H20" />
                  </TreeGutter>
                  Subroutines
                </TreeRow>
              </Tree>
            </TreePanel>
            <Splitter />
            <Editor>
              <ToolRow $h={32} $pad={2} $line="#8a8a8a">
                <Combo $w={78} $h={23} $margin="0 4px 0 0">
                  Ladder
                  <ComboArrow />
                </Combo>
                <ToolBtn>
                  <InsertBelow letter="S" />
                </ToolBtn>
                <ToolBtn>
                  <InsertAbove letter="S" />
                </ToolBtn>
                <ToolBtn>
                  <SrIcon />
                </ToolBtn>
                <ToolBtn>
                  <LinkIcon />
                </ToolBtn>
                <Combo $w={59} $h={23} $margin="0 3px 0 2px">
                  100%
                  <ComboArrow />
                </Combo>
                <ToolBtn>
                  <FaBinoculars size={16} />
                </ToolBtn>
                <ToolBtn>
                  <CutIcon size={25} strokeWidth={2.4} color="#000" />
                </ToolBtn>
                <ToolBtn>
                  <DocsIcon />
                </ToolBtn>
                <ToolBtn>
                  <PasteIcon />
                </ToolBtn>
                <ToolBtn>
                  <TurnIcon />
                </ToolBtn>
                <ToolBtn>
                  <TurnIcon flip />
                </ToolBtn>
                <ToolBtn>HEX</ToolBtn>
                <ToolBtn>
                  <Ico>
                    <Bubble />
                  </Ico>
                </ToolBtn>
                <ToolBtn>
                  <BubbleContact />
                </ToolBtn>
                <ToolBtn>
                  <BubbleText />
                </ToolBtn>
              </ToolRow>
              <ToolRow $h={32} $pad={0} $line="#aaa">
                <ToolBtn>
                  <InsertBelow letter="R" />
                </ToolBtn>
                <ToolBtn>
                  <InsertAbove letter="R" />
                </ToolBtn>
                <ToolSep $margin="0 5px 0 6px" />
                <ToolBtn>
                  <Gray d={CONTACT} />
                </ToolBtn>
                <ToolBtn>
                  <Gray d={NC_CONTACT} />
                </ToolBtn>
                <ToolBtn>
                  <Gray d={COIL} />
                </ToolBtn>
                <ToolBtn>
                  <Gray d={NC_COIL} />
                </ToolBtn>
                <ToolSep $margin="0 5px" />
                <ToolBtn>
                  <Gray d={BRANCH} />
                </ToolBtn>
                <ToolBtn>
                  <Gray d={BRANCH_X} />
                </ToolBtn>
                <ToolSep $margin="0 6px" />
                <ToolBtn>
                  <BoxFunc label="≥" />
                </ToolBtn>
                <ToolBtn>
                  <BoxFunc label="..." dash />
                </ToolBtn>
                <ToolBtn>
                  <GrayText sx={0.66}>%TM</GrayText>
                </ToolBtn>
                <ToolBtn>
                  <GrayText sx={0.7}>%C</GrayText>
                </ToolBtn>
                <ToolBtn>
                  <Gray d={DOUBLE_ARROW} w={2.6} />
                </ToolBtn>
                <ToolSep $margin="0 29px 0 6px" />
                <ToolBtn>
                  <Tri dir="left" />
                </ToolBtn>
                <ToolBtn>
                  <Tri dir="right" />
                </ToolBtn>
                <ToolBtn>
                  <Gray d={CONTACT} />
                </ToolBtn>
                <ToolBtn>
                  <Gray d={NC_CONTACT} />
                </ToolBtn>
                <ToolBtn>
                  <PnIcon letter="P" />
                </ToolBtn>
                <ToolBtn>
                  <PnIcon letter="N" />
                </ToolBtn>
              </ToolRow>
              <LadderRow>
                <Ladder>
                  <LadderDrawing />
                  <RungButton $top={28}>Rung 17</RungButton>
                  <RungButton $top={290}>Rung 18</RungButton>
                </Ladder>
                <VScroll>
                  <ScrollArrow $h={10} $up />
                  <ScrollGap $h={416} />
                  <ScrollThumb $h={82}>
                    <ScrollGrip />
                  </ScrollThumb>
                  <ScrollGap $h={45} />
                  <ScrollArrow $h={11} />
                </VScroll>
              </LadderRow>
            </Editor>
          </Upper>
          <HDivider />
          <Lower>
            <Filters>
              <FilterRow>
                <Combo $w={59} $h={23} $margin="0 1px 0 0">
                  All
                  <ComboArrow />
                </Combo>
                <Combo $w={79} $h={23} $margin="0 1px 0 0">
                  Without
                  <ComboArrow />
                </Combo>
                <Combo $w={40} $h={23} $blank>
                  <span />
                  <ComboArrow $off />
                </Combo>
                <SearchBox $w={280} />
                <SearchBox $w={719} />
              </FilterRow>
              <Columns>
                <ColumnHead>Used</ColumnHead>
                <ColumnHead>Address</ColumnHead>
                <ColumnHead>Symbol</ColumnHead>
                <ColumnHead>Comment</ColumnHead>
              </Columns>
            </Filters>
            <FindSlot>
              <FindButton>Find</FindButton>
            </FindSlot>
            <VScroll>
              <ScrollGap $h={2} />
              <ScrollArrow $h={10} $up />
              <ScrollGap $h={7} />
              <ScrollThumb $h={8}>
                <ScrollGrip />
              </ScrollThumb>
              <ScrollGap $h={22} />
              <ScrollArrow $h={9} />
            </VScroll>
          </Lower>
        </Main>
        <Rail>
          <SidePanel>
            <SideButton $active>
              Edit
              <br />
              Program
            </SideButton>
            <SideButton>
              Define
              <br />
              Symbols
            </SideButton>
          </SidePanel>
          <Chevrons>
            <svg width="15" height="9" viewBox="0 0 15 9">
              <path d="M1 4 L7.5 1 L14 4 M1 8 L7.5 5 L14 8" fill="none" stroke="#cfcfe0" />
            </svg>
          </Chevrons>
        </Rail>
      </Body>
    </Frame>
  );
}
